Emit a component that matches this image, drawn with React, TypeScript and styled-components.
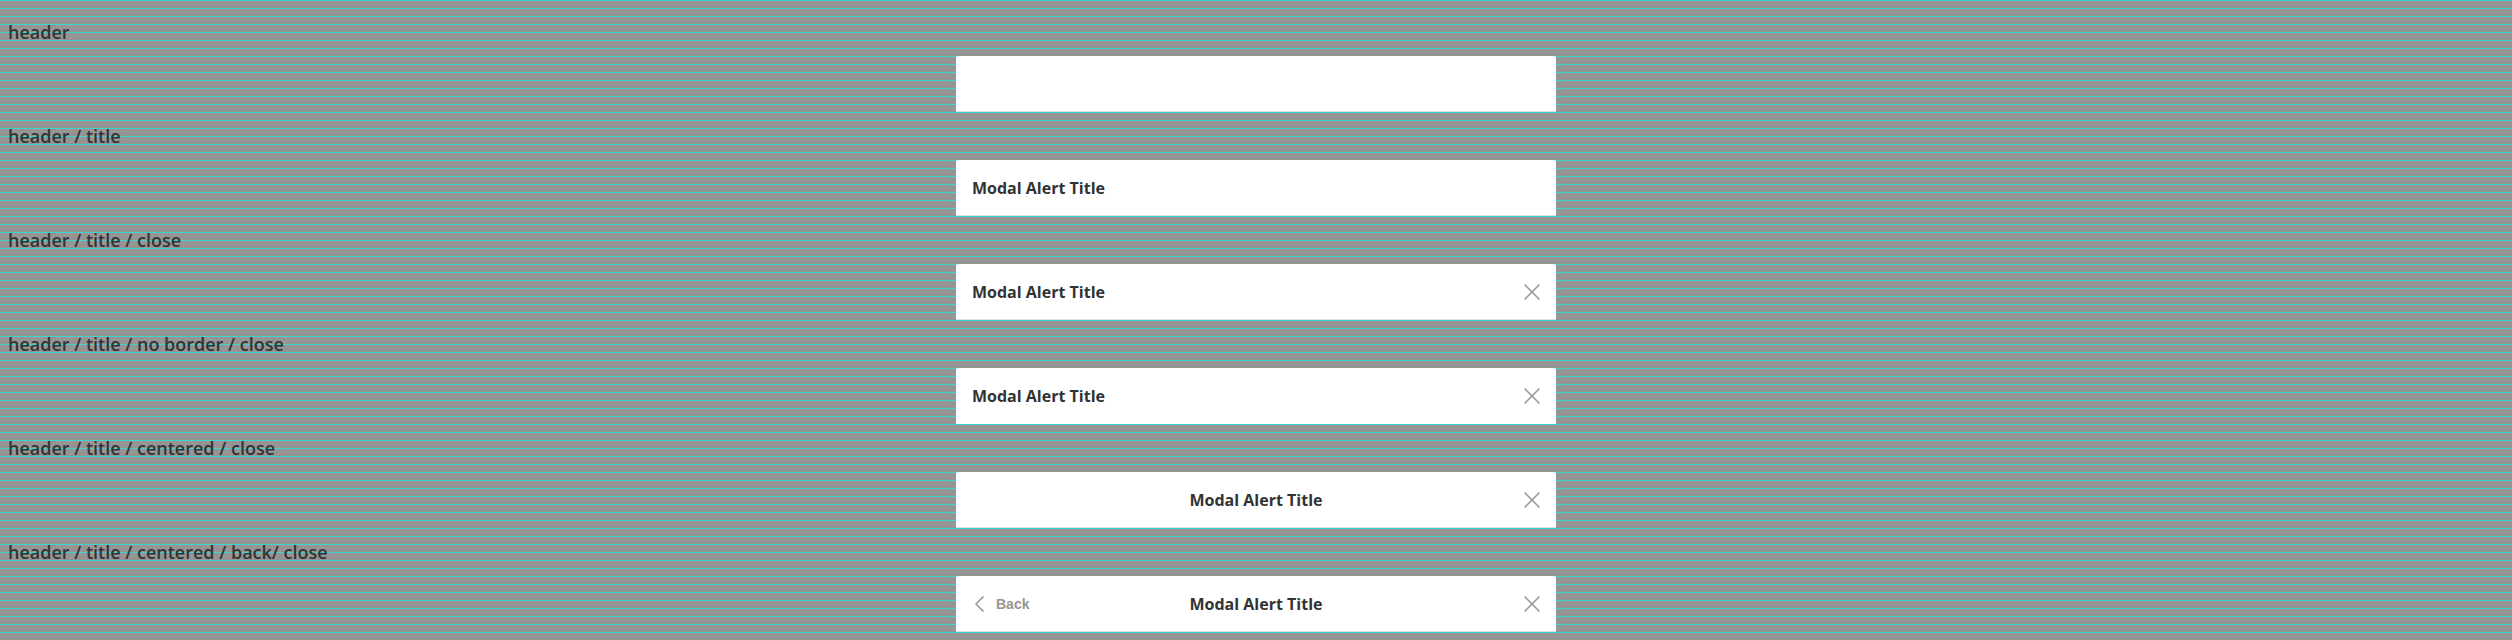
import React from "react";
import styled, { createGlobalStyle, css } from "styled-components";

const GlobalStyle = createGlobalStyle`
  *, *::before, *::after { box-sizing: border-box; }
  body { margin: 0; }
`;

const Page = styled.main`
  height: 640px;
  padding: 16px 8px 0;
  overflow: hidden;
  font-family: "Open Sans", sans-serif;
  color: #333;
  background: #969494 linear-gradient(to bottom, #3dd3d1 1px, transparent 1px) 0 0 / 100% 8px;
`;

const Example = styled.section`
  height: 104px;
`;

const Label = styled.h2`
  margin: 0 0 8px;
  height: 32px;
  font-size: 18px;
  font-weight: 600;
  line-height: 32px;
`;

const ModalHeader = styled.header<{ $borderless?: boolean }>`
  display: grid;
  grid-template-columns: 1fr auto 1fr;
  align-items: center;
  width: 600px;
  height: 56px;
  margin: 0 auto;
  padding: 0 16px;
  background: #fff;
  box-shadow: ${(p) => (p.$borderless ? "none" : "inset 0 -1px #dfdfdf")};
  border-radius: 2px 2px 0 0;
`;

const Title = styled.h3<{ $centered?: boolean }>`
  margin: 0;
  font-size: 16px;
  font-weight: 700;
  line-height: 24px;
  ${(p) => p.$centered ? css`grid-column: 2;` : css`grid-column: 1; white-space: nowrap;`}
`;

const IconButton = styled.button`
  grid-column: 3;
  justify-self: end;
  display: flex;
  padding: 0;
  border: 0;
  background: none;
  color: #969494;
`;

const BackButton = styled.button`
  grid-column: 1;
  justify-self: start;
  display: flex;
  align-items: center;
  gap: 8px;
  padding: 0;
  border: 0;
  background: none;
  color: #969494;
  font: 700 14px/24px "Liberation Sans", Arial, sans-serif;
`;

const CloseIcon = () => (
  <svg width="16" height="16" viewBox="0 0 16 16" fill="none" stroke="currentColor" strokeWidth="1.5">
    <path d="M0.5 0.5L15.5 15.5M15.5 0.5L0.5 15.5" />
  </svg>
);

const BackIcon = () => (
  <svg width="16" height="16" viewBox="0 0 16 16" fill="none" stroke="currentColor" strokeWidth="1.5">
    <path d="M11.5 0.5L4 8L11.5 15.5" />
  </svg>
);

interface Variant {
  label: string;
  title?: string;
  centered?: boolean;
  back?: boolean;
  close?: boolean;
  borderless?: boolean;
}

const title = "Modal Alert Title";

const variants: Variant[] = [
  { label: "header" },
  { label: "header / title", title },
  { label: "header / title / close", title, close: true },
  { label: "header / title / no border / close", title, close: true, borderless: true },
  { label: "header / title / centered / close", title, centered: true, close: true },
  { label: "header / title / centered / back/ close", title, centered: true, back: true, close: true },
];

export default function App() {
  return (
    <>
      <GlobalStyle />
      <Page>
        {variants.map((v) => (
          <Example key={v.label}>
            <Label>{v.label}</Label>
            <ModalHeader $borderless={v.borderless}>
              {v.back && <BackButton><BackIcon />Back</BackButton>}
              {v.title && <Title $centered={v.centered}>{v.title}</Title>}
              {v.close && <IconButton aria-label="Close"><CloseIcon /></IconButton>}
            </ModalHeader>
          </Example>
        ))}
      </Page>
    </>
  );
}
